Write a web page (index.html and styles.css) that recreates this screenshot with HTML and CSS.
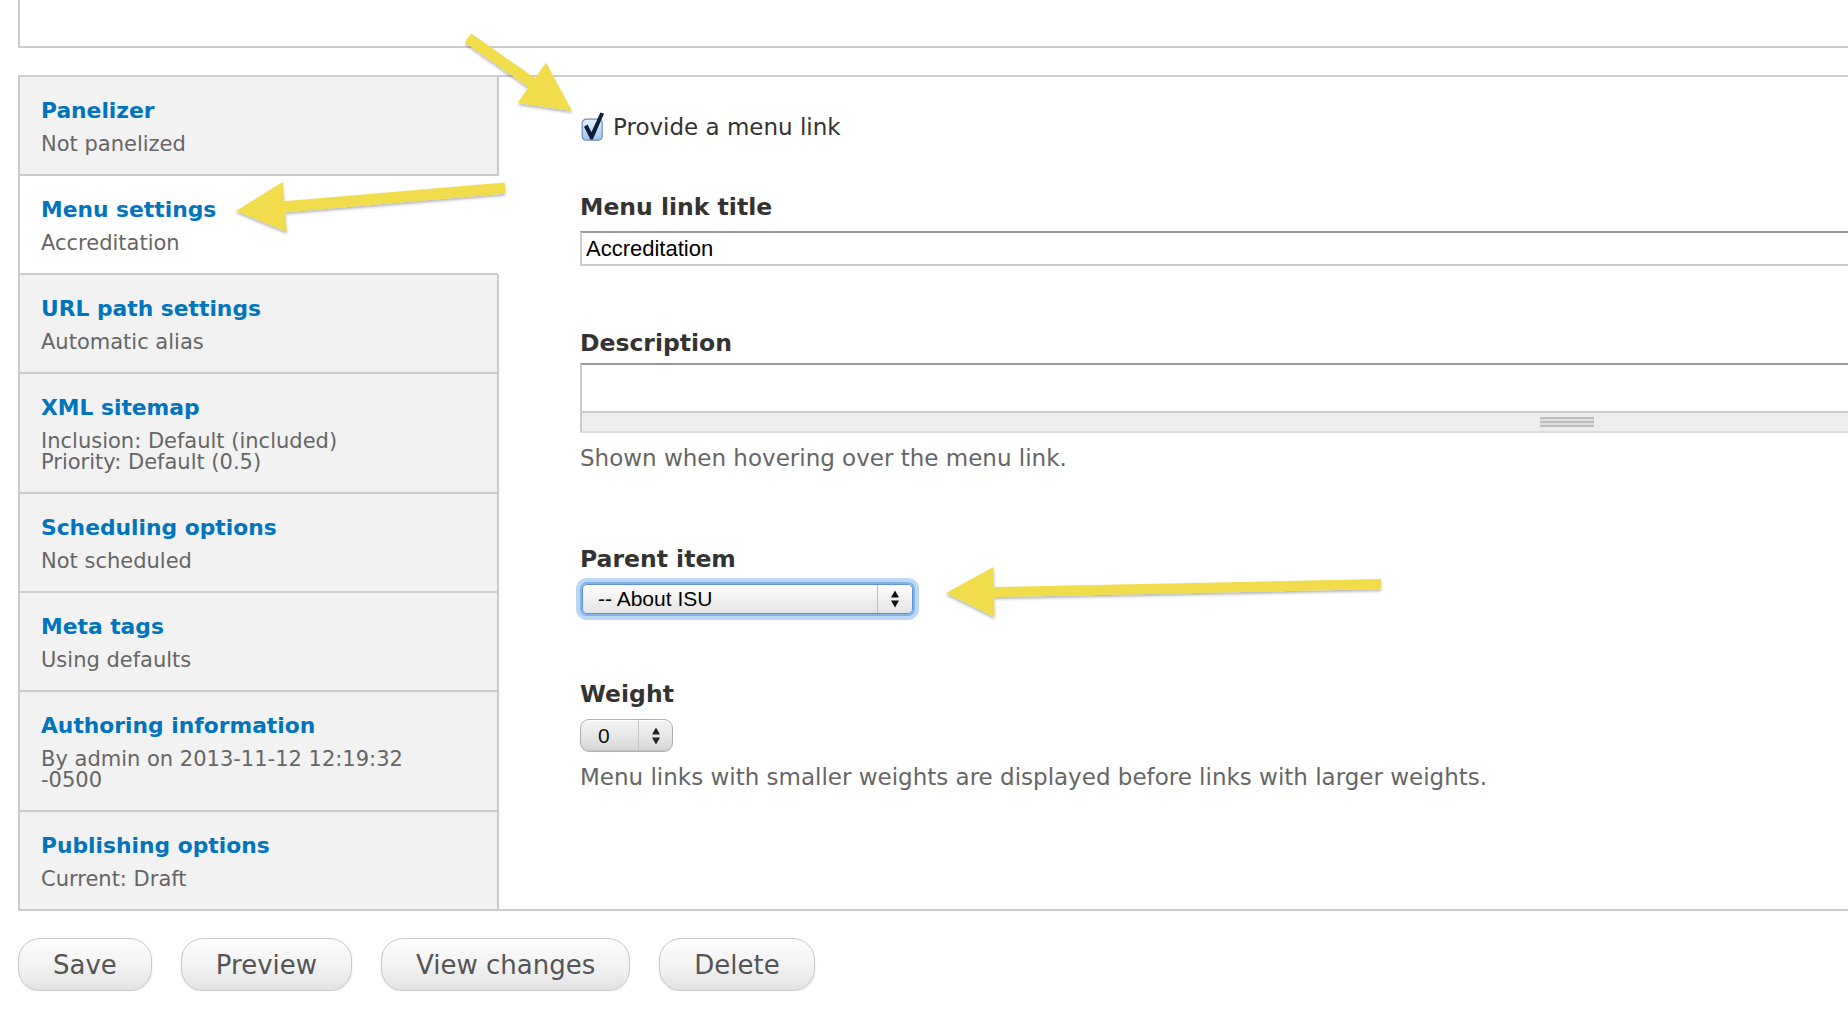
FILE: index.html
```html
<!DOCTYPE html>
<html lang="en">
<head>
<meta charset="utf-8">
<title>Menu settings</title>
<link rel="stylesheet" href="styles.css">
</head>
<body>
<div class="page">
  <div class="top-box"></div>

  <div class="vtabs">
    <ul class="vtabs-menu">
      <li class="vtab"><a class="vtab-title" href="#">Panelizer</a><span class="vtab-summary">Not panelized</span></li>
      <li class="vtab is-selected"><a class="vtab-title" href="#">Menu settings</a><span class="vtab-summary">Accreditation</span></li>
      <li class="vtab"><a class="vtab-title" href="#">URL path settings</a><span class="vtab-summary">Automatic alias</span></li>
      <li class="vtab"><a class="vtab-title" href="#">XML sitemap</a><span class="vtab-summary">Inclusion: Default (included)<br>Priority: Default (0.5)</span></li>
      <li class="vtab"><a class="vtab-title" href="#">Scheduling options</a><span class="vtab-summary">Not scheduled</span></li>
      <li class="vtab"><a class="vtab-title" href="#">Meta tags</a><span class="vtab-summary">Using defaults</span></li>
      <li class="vtab"><a class="vtab-title" href="#">Authoring information</a><span class="vtab-summary">By admin on 2013-11-12 12:19:32<br>-0500</span></li>
      <li class="vtab"><a class="vtab-title" href="#">Publishing options</a><span class="vtab-summary">Current: Draft</span></li>
    </ul>

    <div class="vtabs-pane">
      <div class="checkbox-row">
        <svg class="checkbox" viewBox="0 0 24 30" width="24" height="30" aria-hidden="true">
          <defs>
            <linearGradient id="cbg" x1="0" y1="0" x2="0" y2="1">
              <stop offset="0" stop-color="#e6f1fd"/>
              <stop offset="1" stop-color="#9fc5f0"/>
            </linearGradient>
          </defs>
          <rect x="2.2" y="7.2" width="20" height="21" rx="4" fill="url(#cbg)" stroke="#6f8db3" stroke-width="1.2"/>
          <path d="M4 14.8 L7.6 12.6 L11.4 20.2 L20.4 0.6 L24 1.8 L12.8 27.6 L10.4 27.6 Z" fill="#0b1f3b"/>
        </svg>
        <label class="checkbox-label">Provide a menu link</label>
      </div>

      <label class="form-label label-title">Menu link title</label>
      <input class="text-input" type="text" value="Accreditation">

      <label class="form-label label-description">Description</label>
      <textarea class="textarea"></textarea>
      <div class="grippie"><span class="grippie-handle"></span></div>
      <div class="form-desc desc-description">Shown when hovering over the menu link.</div>

      <label class="form-label label-parent">Parent item</label>
      <div class="select select-parent">
        <span class="select-value">-- About ISU</span>
        <span class="select-arrows">
          <svg viewBox="0 0 10 18" width="10" height="18" aria-hidden="true"><path d="M1 7.5 L5 0.5 L9 7.5 Z M1 10.5 L9 10.5 L5 17.5 Z" fill="#111"/></svg>
        </span>
      </div>

      <label class="form-label label-weight">Weight</label>
      <div class="select select-weight">
        <span class="select-value">0</span>
        <span class="select-arrows">
          <svg viewBox="0 0 10 18" width="10" height="18" aria-hidden="true"><path d="M1 7.5 L5 0.5 L9 7.5 Z M1 10.5 L9 10.5 L5 17.5 Z" fill="#222"/></svg>
        </span>
      </div>
      <div class="form-desc desc-weight">Menu links with smaller weights are displayed before links with larger weights.</div>
    </div>
  </div>

  <div class="actions">
    <button class="button" type="button">Save</button>
    <button class="button" type="button">Preview</button>
    <button class="button" type="button">View changes</button>
    <button class="button" type="button">Delete</button>
  </div>

  <svg class="annotations" viewBox="0 0 1848 1030" width="1848" height="1030" aria-hidden="true">
    <defs>
      <filter id="shadow" x="-10%" y="-20%" width="120%" height="150%">
        <feDropShadow dx="0" dy="2" stdDeviation="1.5" flood-color="#000" flood-opacity="0.3"/>
      </filter>
    </defs>
    <g fill="#f1dc4b" filter="url(#shadow)">
      <polygon points="471.2,33.5 535.1,78.3 546,62.7 572,111 517.8,102.9 528.7,87.3 464.8,42.5"/>
      <polygon points="504.5,182.5 284.3,201.3 282.7,181.9 236,211 286.9,231.7 285.3,212.3 505.5,193.5"/>
      <polygon points="1380.9,579 993.9,587 993.5,567 946,593 994.5,617 994.1,597 1381.1,589"/>
    </g>
  </svg>
</div>
</body>
</html>
```

FILE: styles.css
```css
html, body {
  margin: 0;
  padding: 0;
  background: #fff;
  overflow: hidden;
}

body {
  font-family: "DejaVu Sans", "Liberation Sans", sans-serif;
  color: #333;
}

.page {
  position: relative;
  width: 2602px;
  padding-left: 18px;
  box-sizing: border-box;
}

.top-box {
  height: 46px;
  border: 2px solid #ccc;
  border-top: none;
}

/* Vertical tabs */
.vtabs {
  margin-top: 27px;
  display: flex;
  border: 2px solid #ccc;
}

.vtabs-menu {
  list-style: none;
  margin: 0;
  padding: 0;
  width: 479px;
  flex: none;
  background: #f2f2f2;
}

.vtab {
  padding: 20px 21px 19px;
  border-bottom: 2px solid #ccc;
  border-right: 2px solid #ccc;
}

.vtab:last-child {
  border-bottom: none;
}

.vtab.is-selected {
  background: #fff;
  border-right-color: #fff;
}

.vtab-title {
  display: block;
  font-weight: bold;
  font-size: 21.8px;
  line-height: 28px;
  color: #0074bd;
  text-decoration: none;
}

.vtab-summary {
  display: block;
  margin-top: 9px;
  font-size: 21px;
  line-height: 21px;
  color: #666;
}

.vtabs-pane {
  flex: 1;
  padding: 35px 46px 0 81px;
  min-width: 0;
}

/* Checkbox */
.checkbox-row {
  display: flex;
  align-items: flex-start;
  gap: 9px;
}

.checkbox {
  flex: none;
  display: block;
}

.checkbox-label {
  font-size: 23px;
  line-height: 30px;
  color: #333;
}

/* Labels */
.form-label {
  display: block;
  font-weight: bold;
  font-size: 23.5px;
  line-height: 30px;
  color: #333;
}

.label-title { margin-top: 50px; }
.label-description { margin-top: 62px; }
.label-parent { margin-top: 71px; }
.label-weight { margin-top: 65px; }

/* Text input */
.text-input {
  display: block;
  box-sizing: border-box;
  width: 100%;
  height: 35px;
  margin: 9px 0 0;
  padding: 0 4px;
  border: 2px solid #ccc;
  border-top-color: #999;
  border-radius: 0;
  background: #fff;
  font-family: "Liberation Sans", Arial, sans-serif;
  font-size: 22px;
  color: #000;
  outline: none;
}

/* Textarea */
.textarea {
  display: block;
  box-sizing: border-box;
  width: 100%;
  height: 48px;
  margin: 5px 0 0;
  padding: 0;
  border: 2px solid #ccc;
  border-top-color: #999;
  border-bottom: none;
  border-radius: 0;
  resize: none;
  outline: none;
  background: #fff;
}

.grippie {
  box-sizing: border-box;
  height: 22px;
  border: 2px solid #ccc;
  border-bottom-color: #ddd;
  background: #eee;
  display: flex;
  align-items: center;
  justify-content: center;
}

.grippie-handle {
  display: block;
  width: 54px;
  height: 10px;
  background: repeating-linear-gradient(to bottom, #bdbdbd 0, #bdbdbd 2px, #dedede 2px, #dedede 4px);
}

/* Descriptions */
.form-desc {
  font-size: 23px;
  line-height: 30px;
  color: #666;
}

.desc-description { margin-top: 10px; }
.desc-weight { margin-top: 10px; }

/* Selects */
.select {
  display: flex;
  align-items: center;
  box-sizing: border-box;
  font-family: "Liberation Sans", Arial, sans-serif;
  font-size: 21px;
  color: #000;
  background: linear-gradient(#fefefe, #f1f1f1 50%, #e4e4e4);
}

.select-value {
  flex: 1;
  white-space: nowrap;
}

.select-arrows {
  align-self: stretch;
  display: flex;
  align-items: center;
  justify-content: center;
  border-left: 1px solid #bdbdbd;
}

.select-arrows svg {
  display: block;
}

.select-parent {
  margin: 10px 0 0 2px;
  width: 331px;
  height: 30px;
  border: 1px solid #5d93d6;
  border-radius: 5px;
  box-shadow: 0 0 0 2px #82b2ea, 0 0 0 6px rgba(165, 203, 243, 0.75);
}

.select-parent .select-value {
  padding-left: 15px;
}

.select-parent .select-arrows {
  width: 34px;
}

.select-weight {
  margin-top: 10px;
  width: 93px;
  height: 33px;
  border: 1px solid #b0b0b0;
  border-radius: 9px;
  background: linear-gradient(#f4f4f4, #e9e9e9 45%, #d6d6d6);
  box-shadow: inset 0 1px 0 #fff, inset 0 -1px 1px rgba(0, 0, 0, 0.08);
}

.select-weight .select-value {
  padding-left: 17px;
  color: #111;
}

.select-weight .select-arrows {
  width: 33px;
  border-left-color: #c4c4c4;
}

/* Buttons */
.actions {
  margin-top: 27px;
  display: flex;
  gap: 29px;
}

.button {
  height: 53px;
  padding: 0 34px;
  border: 1px solid #c9c9c9;
  border-radius: 22px;
  background: linear-gradient(#fdfdfd, #f3f3f3 50%, #e3e3e3);
  box-shadow: 0 1px 2px rgba(0, 0, 0, 0.12);
  font-family: "DejaVu Sans", sans-serif;
  font-size: 26px;
  color: #555;
  cursor: pointer;
}

/* Annotation arrows overlay */
.annotations {
  position: absolute;
  left: 0;
  top: 0;
  pointer-events: none;
}
```
